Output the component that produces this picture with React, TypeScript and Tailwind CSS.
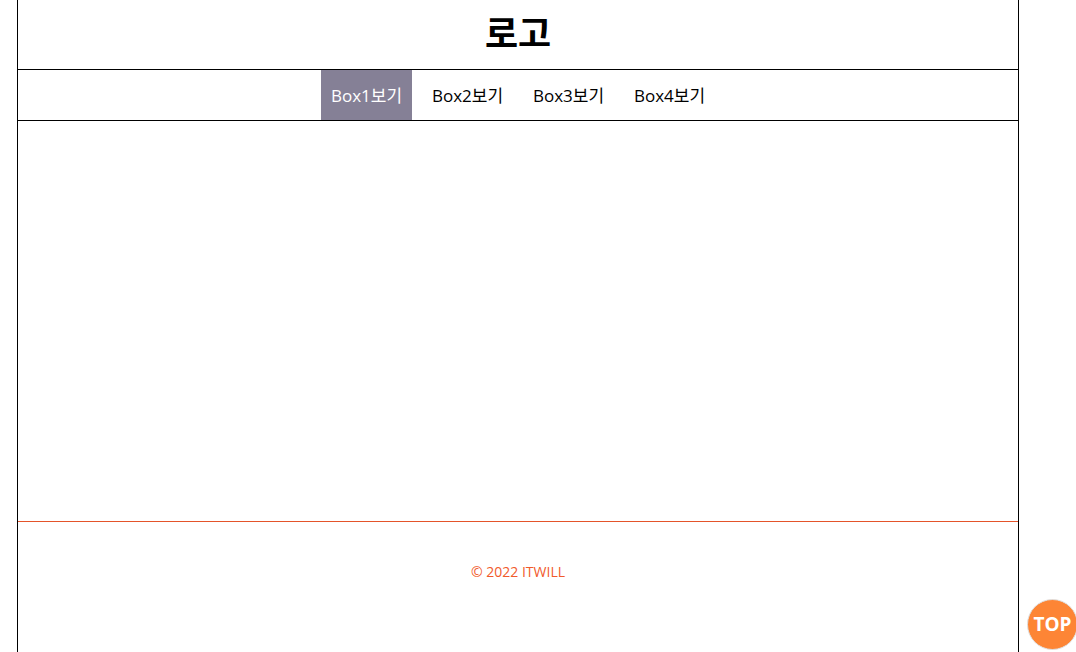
import React from "react";

export default function App() {
  const items = ["Box1보기", "Box2보기", "Box3보기", "Box4보기"];
  return (
    <div
      className="relative w-[1076px] h-[652px] overflow-hidden bg-white"
      style={{ fontFamily: '"Open Sans", "Noto Sans CJK KR", sans-serif' }}
    >
      <div className="ml-[17px] w-[1002px] border-x border-black">
        <header className="h-[70px] border-b border-black flex items-center justify-center">
          <h1
            className="text-[36px] font-bold text-black leading-none pb-[8px]"
            style={{ fontFamily: '"Noto Sans CJK KR", sans-serif' }}
          >
            로고
          </h1>
        </header>
        <nav className="h-[51px] border-b border-black flex justify-center">
          <ul className="flex gap-[10px]">
            {items.map((t, i) => (
              <li
                key={t}
                className={
                  i === 0
                    ? "h-[50px] w-[91px] flex items-center justify-center pt-[2px] bg-[#858096] text-white text-[17px]"
                    : "h-[50px] w-[91px] flex items-center justify-center pt-[2px] text-black text-[17px]"
                }
              >
                {t}
              </li>
            ))}
          </ul>
        </nav>
        <main className="h-[401px] border-b border-[#e4532a]"></main>
        <footer className="h-[131px] flex justify-center pt-[40px]">
          <p className="text-[14px] text-[#f15a2b] leading-[20px]">© 2022 ITWILL</p>
        </footer>
      </div>
      <button className="absolute left-[1027px] top-[599px] w-[51px] h-[51px] rounded-full bg-[#fd8535] border border-[#e0e0e0] text-white font-bold text-[19px] flex items-center justify-center">
        TOP
      </button>
    </div>
  );
}
